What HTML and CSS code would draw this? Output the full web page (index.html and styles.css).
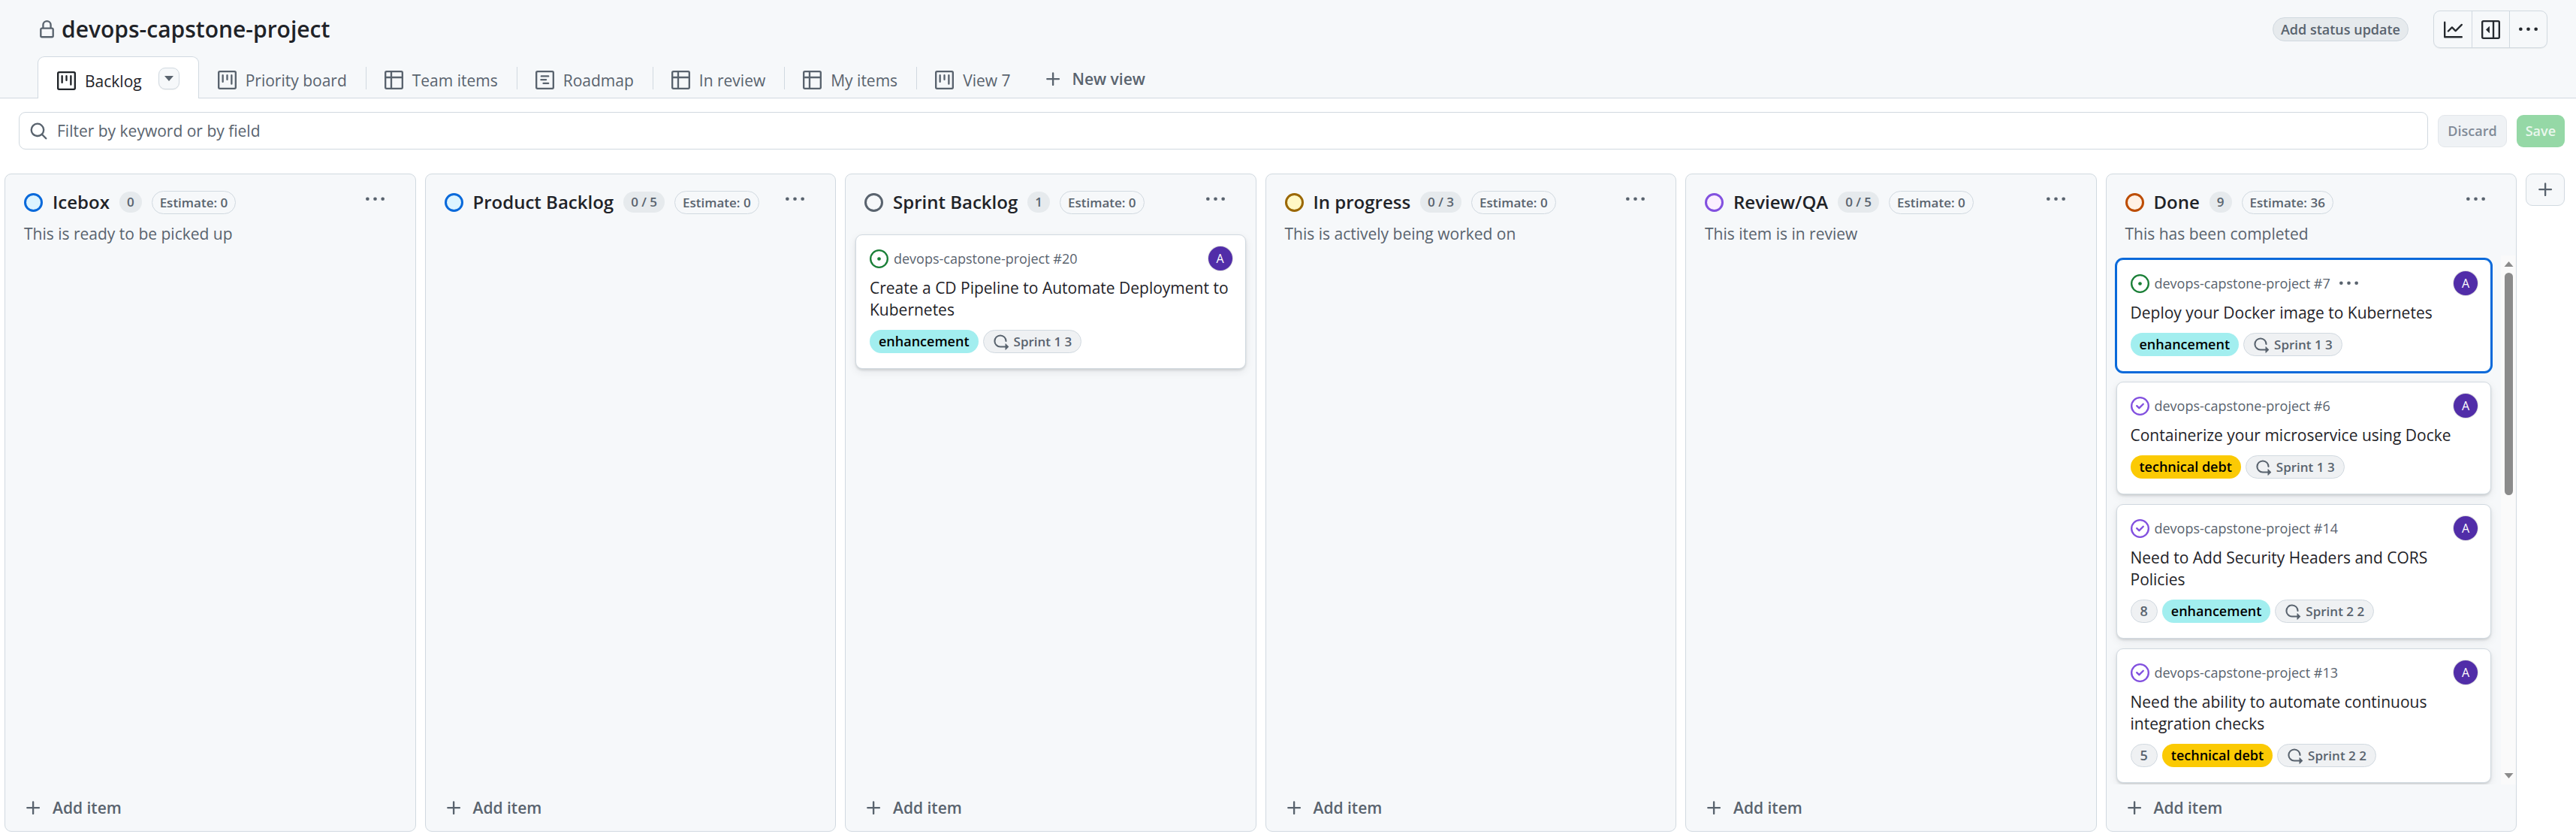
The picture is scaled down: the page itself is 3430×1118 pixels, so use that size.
FILE: index.html
```html
<!DOCTYPE html>
<html lang="en">
<head>
<meta charset="utf-8">
<meta name="viewport" content="width=device-width, initial-scale=1">
<title>devops-capstone-project</title>
<link rel="stylesheet" href="styles.css">
</head>
<body>
<svg class="sprite" aria-hidden="true">
  <symbol id="lock" viewBox="0 0 16 16"><path d="M4 4a4 4 0 0 1 8 0v2h.25c.966 0 1.75.784 1.75 1.75v5.5A1.75 1.75 0 0 1 12.25 15h-8.5A1.75 1.75 0 0 1 2 13.25v-5.5C2 6.784 2.784 6 3.75 6H4Zm8.25 3.5h-8.5a.25.25 0 0 0-.25.25v5.5c0 .138.112.25.25.25h8.5a.25.25 0 0 0 .25-.25v-5.5a.25.25 0 0 0-.25-.25ZM10.5 6V4a2.5 2.5 0 1 0-5 0v2Z"/></symbol>
  <symbol id="graph" viewBox="0 0 16 16"><path d="M1.5 1.75V13.5h13.75a.75.75 0 0 1 0 1.5H.75a.75.75 0 0 1-.75-.75V1.75a.75.75 0 0 1 1.5 0Zm14.28 2.53-5.25 5.25a.75.75 0 0 1-1.06 0L7 7.06 4.28 9.78a.751.751 0 0 1-1.042-.018.751.751 0 0 1-.018-1.042l3.25-3.25a.75.75 0 0 1 1.06 0L10 7.94l4.72-4.72a.751.751 0 0 1 1.042.018.751.751 0 0 1 .018 1.042Z"/></symbol>
  <symbol id="sidebar" viewBox="0 0 16 16"><rect x=".75" y=".75" width="14.5" height="14.5" rx="1" fill="none" stroke="currentColor" stroke-width="1.5"/><path d="M9.5 1H11v14H9.5ZM7 5.4v5.2a.25.25 0 0 1-.43.18L4 8.18a.25.25 0 0 1 0-.36l2.57-2.6A.25.25 0 0 1 7 5.4Z"/></symbol>
  <symbol id="kebab" viewBox="0 0 16 16"><path d="M8 9a1.5 1.5 0 1 0 0-3 1.5 1.5 0 0 0 0 3ZM1.5 9a1.5 1.5 0 1 0 0-3 1.5 1.5 0 0 0 0 3Zm13 0a1.5 1.5 0 1 0 0-3 1.5 1.5 0 0 0 0 3Z"/></symbol>
  <symbol id="board" viewBox="0 0 16 16"><rect x=".75" y=".75" width="14.5" height="14.5" rx="1" fill="none" stroke="currentColor" stroke-width="1.5"/><path d="M4.25 4v5.5M8 4v3.5M11.75 4v7.2" fill="none" stroke="currentColor" stroke-width="1.5" stroke-linecap="round"/></symbol>
  <symbol id="table" viewBox="0 0 16 16"><rect x=".75" y=".75" width="14.5" height="14.5" rx="1" fill="none" stroke="currentColor" stroke-width="1.5"/><path d="M1 5.75h14M5.75 1v14" fill="none" stroke="currentColor" stroke-width="1.5"/></symbol>
  <symbol id="roadmap" viewBox="0 0 16 16"><rect x=".75" y=".75" width="14.5" height="14.5" rx="1" fill="none" stroke="currentColor" stroke-width="1.5"/><path d="M5 4.75h6M4.75 7.75h4.25M6.75 10.75h4.25" fill="none" stroke="currentColor" stroke-width="1.5" stroke-linecap="round"/></symbol>
  <symbol id="plus" viewBox="0 0 16 16"><path d="M7.75 2a.75.75 0 0 1 .75.75V7h4.25a.75.75 0 0 1 0 1.5H8.5v4.25a.75.75 0 0 1-1.5 0V8.5H2.75a.75.75 0 0 1 0-1.5H7V2.75A.75.75 0 0 1 7.75 2Z"/></symbol>
  <symbol id="search" viewBox="0 0 16 16"><path d="M10.68 11.74a6 6 0 0 1-7.922-8.982 6 6 0 0 1 8.982 7.922l3.04 3.04a.749.749 0 0 1-.326 1.275.749.749 0 0 1-.734-.215ZM11.5 7a4.499 4.499 0 1 0-8.997 0A4.499 4.499 0 0 0 11.5 7Z"/></symbol>
  <symbol id="open" viewBox="0 0 16 16"><path d="M8 9.5a1.5 1.5 0 1 0 0-3 1.5 1.5 0 0 0 0 3Z"/><path d="M8 0a8 8 0 1 1 0 16A8 8 0 0 1 8 0ZM1.5 8a6.5 6.5 0 1 0 13 0 6.5 6.5 0 0 0-13 0Z"/></symbol>
  <symbol id="closed" viewBox="0 0 16 16"><path d="M11.28 6.78a.75.75 0 0 0-1.06-1.06L7.25 8.69 5.78 7.22a.75.75 0 0 0-1.06 1.06l2 2a.75.75 0 0 0 1.06 0l3.5-3.5Z"/><path d="M16 8A8 8 0 1 1 0 8a8 8 0 0 1 16 0Zm-1.5 0a6.5 6.5 0 1 0-13 0 6.5 6.5 0 0 0 13 0Z"/></symbol>
  <symbol id="iteration" viewBox="0 0 16 16"><path d="M2.5 7.25a4.75 4.75 0 0 1 9.5 0 .75.75 0 0 0 1.5 0 6.25 6.25 0 1 0-6.25 6.25H12v2.146c0 .223.27.335.427.177l2.896-2.896a.25.25 0 0 0 0-.354l-2.896-2.896a.25.25 0 0 0-.427.177V12H7.25A4.75 4.75 0 0 1 2.5 7.25Z"/></symbol>
</svg>

<header class="header">
  <div class="title-bar">
    <svg class="lock"><use href="#lock"/></svg>
    <h1 class="project-title">devops-capstone-project</h1>
    <button class="status" type="button">Add status update</button>
    <div class="button-group">
      <button type="button" aria-label="Insights"><svg class="icon"><use href="#graph"/></svg></button>
      <button type="button" aria-label="Project details"><svg class="icon"><use href="#sidebar"/></svg></button>
      <button type="button" aria-label="More options"><svg class="icon"><use href="#kebab"/></svg></button>
    </div>
  </div>
  <nav class="tabs" aria-label="Views">
    <div class="tab tab-active">
      <a class="tab-link" href="#" aria-current="page"><svg class="icon"><use href="#board"/></svg>Backlog</a>
      <button class="tab-menu" type="button" aria-label="View options"><svg class="caret" viewBox="0 0 12 7"><path d="M0 0h12L6 7Z"/></svg></button>
    </div>
    <a class="tab" href="#"><svg class="icon"><use href="#board"/></svg>Priority board</a>
    <a class="tab" href="#"><svg class="icon"><use href="#table"/></svg>Team items</a>
    <a class="tab" href="#"><svg class="icon"><use href="#roadmap"/></svg>Roadmap</a>
    <a class="tab" href="#"><svg class="icon"><use href="#table"/></svg>In review</a>
    <a class="tab" href="#"><svg class="icon"><use href="#table"/></svg>My items</a>
    <a class="tab" href="#"><svg class="icon"><use href="#board"/></svg>View 7</a>
    <button class="new-view" type="button"><svg class="icon"><use href="#plus"/></svg>New view</button>
  </nav>
</header>

<form class="filter">
  <label class="filter-box">
    <svg class="icon"><use href="#search"/></svg>
    <input type="text" placeholder="Filter by keyword or by field" aria-label="Filter by keyword or by field">
  </label>
  <button class="discard" type="button" disabled>Discard</button>
  <button class="save" type="button" disabled>Save</button>
</form>

<main class="board">
  <section class="column">
    <header class="column-head">
      <span class="dot dot-blue"></span><h2>Icebox</h2><span class="count">0</span><span class="estimate">Estimate: 0</span>
      <button class="more" type="button" aria-label="Column options"><svg class="icon"><use href="#kebab"/></svg></button>
    </header>
    <p class="column-note">This is ready to be picked up</p>
    <div class="list"></div>
    <button class="add-item" type="button"><svg class="icon"><use href="#plus"/></svg>Add item</button>
  </section>

  <section class="column">
    <header class="column-head">
      <span class="dot dot-blue"></span><h2>Product Backlog</h2><span class="count">0 / 5</span><span class="estimate">Estimate: 0</span>
      <button class="more" type="button" aria-label="Column options"><svg class="icon"><use href="#kebab"/></svg></button>
    </header>
    <div class="list"></div>
    <button class="add-item" type="button"><svg class="icon"><use href="#plus"/></svg>Add item</button>
  </section>

  <section class="column">
    <header class="column-head">
      <span class="dot dot-gray"></span><h2>Sprint Backlog</h2><span class="count">1</span><span class="estimate">Estimate: 0</span>
      <button class="more" type="button" aria-label="Column options"><svg class="icon"><use href="#kebab"/></svg></button>
    </header>
    <div class="list">
      <div class="cards">
        <article class="card">
          <div class="card-top"><svg class="icon state-open"><use href="#open"/></svg><span>devops-capstone-project #20</span><span class="avatar">A</span></div>
          <h3><a href="#">Create a CD Pipeline to Automate Deployment to Kubernetes</a></h3>
          <div class="tags"><span class="tag tag-enhancement">enhancement</span><span class="tag tag-plain tag-sprint"><svg class="icon-small"><use href="#iteration"/></svg>Sprint 1 3</span></div>
        </article>
      </div>
    </div>
    <button class="add-item" type="button"><svg class="icon"><use href="#plus"/></svg>Add item</button>
  </section>

  <section class="column">
    <header class="column-head">
      <span class="dot dot-yellow"></span><h2>In progress</h2><span class="count">0 / 3</span><span class="estimate">Estimate: 0</span>
      <button class="more" type="button" aria-label="Column options"><svg class="icon"><use href="#kebab"/></svg></button>
    </header>
    <p class="column-note">This is actively being worked on</p>
    <div class="list"></div>
    <button class="add-item" type="button"><svg class="icon"><use href="#plus"/></svg>Add item</button>
  </section>

  <section class="column">
    <header class="column-head">
      <span class="dot dot-purple"></span><h2>Review/QA</h2><span class="count">0 / 5</span><span class="estimate">Estimate: 0</span>
      <button class="more" type="button" aria-label="Column options"><svg class="icon"><use href="#kebab"/></svg></button>
    </header>
    <p class="column-note">This item is in review</p>
    <div class="list"></div>
    <button class="add-item" type="button"><svg class="icon"><use href="#plus"/></svg>Add item</button>
  </section>

  <section class="column">
    <header class="column-head">
      <span class="dot dot-orange"></span><h2>Done</h2><span class="count">9</span><span class="estimate">Estimate: 36</span>
      <button class="more" type="button" aria-label="Column options"><svg class="icon"><use href="#kebab"/></svg></button>
    </header>
    <p class="column-note">This has been completed</p>
    <div class="list">
      <div class="cards">
        <article class="card card-selected">
          <div class="card-top"><svg class="icon state-open"><use href="#open"/></svg><span>devops-capstone-project #7</span><button class="card-more" type="button" aria-label="Item options"><svg class="icon"><use href="#kebab"/></svg></button><span class="avatar">A</span></div>
          <h3><a href="#">Deploy your Docker image to Kubernetes</a></h3>
          <div class="tags"><span class="tag tag-enhancement">enhancement</span><span class="tag tag-plain tag-sprint"><svg class="icon-small"><use href="#iteration"/></svg>Sprint 1 3</span></div>
        </article>
        <article class="card">
          <div class="card-top"><svg class="icon state-closed"><use href="#closed"/></svg><span>devops-capstone-project #6</span><span class="avatar">A</span></div>
          <h3><a href="#">Containerize your microservice using Docke</a></h3>
          <div class="tags"><span class="tag tag-debt">technical debt</span><span class="tag tag-plain tag-sprint"><svg class="icon-small"><use href="#iteration"/></svg>Sprint 1 3</span></div>
        </article>
        <article class="card">
          <div class="card-top"><svg class="icon state-closed"><use href="#closed"/></svg><span>devops-capstone-project #14</span><span class="avatar">A</span></div>
          <h3><a href="#">Need to Add Security Headers and CORS Policies</a></h3>
          <div class="tags"><span class="tag tag-plain">8</span><span class="tag tag-enhancement">enhancement</span><span class="tag tag-plain tag-sprint"><svg class="icon-small"><use href="#iteration"/></svg>Sprint 2 2</span></div>
        </article>
        <article class="card">
          <div class="card-top"><svg class="icon state-closed"><use href="#closed"/></svg><span>devops-capstone-project #13</span><span class="avatar">A</span></div>
          <h3><a href="#">Need the ability to automate continuous integration checks</a></h3>
          <div class="tags"><span class="tag tag-plain">5</span><span class="tag tag-debt">technical debt</span><span class="tag tag-plain tag-sprint"><svg class="icon-small"><use href="#iteration"/></svg>Sprint 2 2</span></div>
        </article>
      </div>
      <div class="scrollbar" aria-hidden="true">
        <svg viewBox="0 0 12 7"><path d="M0 7h12L6 0Z"/></svg>
        <div class="track"><div class="thumb"></div></div>
        <svg viewBox="0 0 12 7"><path d="M0 0h12L6 7Z"/></svg>
      </div>
    </div>
    <button class="add-item" type="button"><svg class="icon"><use href="#plus"/></svg>Add item</button>
  </section>

  <button class="add-column" type="button" aria-label="Add a new column"><svg class="icon"><use href="#plus"/></svg></button>
</main>
</body>
</html>
```
FILE: styles.css
```css
:root {
  --ink: #1f2328;
  --muted: #59636e;
  --line: #d1d9e0;
  --subtle: #f6f8fa;
}

* { box-sizing: border-box; }

body {
  margin: 0;
  height: 100vh;
  display: flex;
  flex-direction: column;
  background: #fff;
  color: var(--ink);
  font: 21px/30px "Open Sans", "Noto Sans", sans-serif;
}

h1, h2, h3, p { margin: 0; }
a { color: inherit; text-decoration: none; }

button {
  margin: 0;
  padding: 0;
  border: 0;
  background: none;
  color: inherit;
  font: inherit;
}

svg { flex: none; fill: currentColor; display: block; }
.sprite { position: absolute; width: 0; height: 0; }
.icon { width: 25px; height: 25px; }
.icon-small { width: 22px; height: 22px; }

/* Header */
.header { background: var(--subtle); }

.title-bar {
  display: flex;
  align-items: center;
  height: 75px;
  padding: 3px 38px 0 50px;
}

.lock { width: 25px; height: 25px; color: var(--muted); }
.project-title { margin-left: 7px; font-size: 30px; line-height: 40px; font-weight: 600; }

.status {
  height: 32px;
  margin-left: auto;
  padding: 0 10px;
  border: 1px solid var(--line);
  border-radius: 16px;
  background: #e6eaed;
  color: var(--muted);
  font-size: 18px;
  line-height: 28px;
  font-weight: 600;
}

.button-group {
  display: flex;
  margin-left: 33px;
  border: 1px solid var(--line);
  border-radius: 9px;
  box-shadow: 0 1px 1px rgba(31, 35, 40, .06);
}

.button-group button { display: grid; place-items: center; width: 50px; height: 48px; color: #25292e; }
.button-group button + button { border-left: 1px solid var(--line); }

.tabs {
  display: flex;
  height: 56px;
  padding-left: 50px;
  border-bottom: 1px solid var(--line);
  color: var(--muted);
}

.tab { display: flex; align-items: center; gap: 12px; padding: 8px 25px 0; }
.tab + a.tab + a.tab { position: relative; }
.tab + a.tab + a.tab::before {
  content: "";
  position: absolute;
  left: 0;
  top: 14px;
  width: 1px;
  height: 30px;
  background: var(--line);
}

.tab-active {
  gap: 22px;
  margin-bottom: -1px;
  border: 1px solid var(--line);
  border-bottom: 0;
  border-radius: 9px 9px 0 0;
  background: #fff;
  color: var(--ink);
}

.tab-link { display: flex; align-items: center; gap: 12px; }

.tab-menu {
  display: grid;
  place-items: center;
  width: 28px;
  height: 29px;
  margin-bottom: 6px;
  border: 1px solid var(--line);
  border-radius: 9px;
  background: var(--subtle);
  color: var(--muted);
  box-shadow: 0 1px 1px rgba(31, 35, 40, .06);
}

.caret { width: 12px; height: 7px; }
.new-view { display: flex; align-items: center; gap: 12px; padding: 5px 20px 0; font-weight: 600; }

/* Filter */
.filter { display: flex; align-items: center; gap: 13px; padding: 18px 15px 0 25px; }

.filter-box {
  display: flex;
  flex: 1;
  align-items: center;
  gap: 12px;
  height: 50px;
  padding: 0 13px;
  border: 1px solid var(--line);
  border-radius: 9px;
  color: var(--muted);
}

.filter-box input { flex: 1; min-width: 0; padding: 0; border: 0; outline: 0; background: none; font: inherit; color: var(--ink); }
.filter-box input::placeholder { color: var(--muted); opacity: 1; }

.discard, .save { height: 43px; padding: 0 12px; border-radius: 9px; font-size: 18px; line-height: 28px; font-weight: 600; }
.discard { border: 1px solid #e3e7eb; background: #eff2f5; color: #818b98; }
.save { background: #95d8a6; color: #eaf7ed; }

/* Board */
.board {
  display: flex;
  flex: 1;
  align-items: stretch;
  gap: 12px;
  min-height: 0;
  padding: 32px 15px 11px 6px;
}

.column {
  display: flex;
  flex: 1;
  flex-direction: column;
  min-width: 0;
  border: 1px solid var(--line);
  border-radius: 9px;
  background: var(--subtle);
}

.column-head { display: flex; align-items: center; gap: 13px; padding: 20px 41px 0 25px; height: 54px; flex: none; }
.column-head h2 { font-size: 24px; line-height: 34px; font-weight: 600; white-space: nowrap; }

.dot { flex: none; width: 25px; height: 25px; border: 3px solid; border-radius: 50%; }
.dot-blue { border-color: #0969da; background: #ddf4ff; }
.dot-gray { border-color: #59636e; background: #f6f8fa; }
.dot-yellow { border-color: #9a6700; background: #fff8c5; }
.dot-purple { border-color: #8250df; background: #fbefff; }
.dot-orange { border-color: #bc4c00; background: #fff1e5; }

.count, .estimate { flex: none; color: var(--muted); font-size: 17px; font-weight: 600; }
.count { padding: 0 10px; border-radius: 14px; background: #e6eaed; line-height: 28px; }
.estimate { padding: 0 10px; border: 1px solid var(--line); border-radius: 16px; line-height: 29px; }
.more { margin: 0 0 8px auto; color: var(--muted); }
.column-note { padding: 9px 25px 0; line-height: 32px; color: var(--muted); height: 54px; flex: none; }

.list { display: flex; flex: 1; min-height: 0; overflow: hidden; }
.cards { display: flex; flex: 1; flex-direction: column; gap: 13px; min-width: 0; padding: 5px 13px 0 13px; }
.column-head + .list { padding-top: 21px; }

.card {
  flex: none;
  padding: 15px 17px 20px 18px;
  border: 1px solid var(--line);
  border-radius: 9px;
  background: #fff;
  box-shadow: 0 2px 3px rgba(37, 41, 46, .14), 0 4px 12px rgba(37, 41, 46, .08);
}

.card-selected { border-color: #0969da; box-shadow: 0 0 0 2px #0969da; }
.card-top { display: flex; align-items: center; gap: 7px; height: 32px; color: var(--muted); font-size: 18px; }
.card-more { margin-left: 5px; }
.state-open { color: #1a7f37; }
.state-closed { color: #8250df; }

.avatar {
  width: 32px;
  height: 32px;
  margin-left: auto;
  border-radius: 50%;
  background: #512da8;
  box-shadow: 0 0 0 1px rgba(31, 35, 40, .15);
  color: #fff;
  font-size: 16px;
  line-height: 32px;
  text-align: center;
}

.card h3 { margin-top: 9px; font-size: 21px; line-height: 29px; font-weight: 400; }
.tags { display: flex; gap: 6px; margin-top: 12px; }

.tag { height: 31px; padding: 0 12px; border-radius: 16px; font-size: 18px; line-height: 31px; font-weight: 600; }
.tag-enhancement { background: #a2eeef; color: #000; }
.tag-debt { background: #fbca04; color: #000; }
.tag-plain { border: 1px solid var(--line); background: #eff1f3; color: var(--muted); line-height: 29px; }
.tag-sprint { display: flex; align-items: center; gap: 6px; font-size: 17px; }

.scrollbar {
  display: flex;
  flex-direction: column;
  align-items: center;
  width: 20px;
  padding: 8px 0;
  background: #fafafa;
  color: #8b8b8b;
}

.scrollbar svg { width: 13px; height: 7px; }
.track { flex: 1; margin: 8px 0; }
.thumb { width: 11px; height: 45%; border-radius: 6px; background: #8b8b8b; }

.add-item {
  display: flex;
  flex: none;
  align-items: center;
  gap: 13px;
  height: 62px;
  padding: 0 25px;
  color: var(--muted);
  font-weight: 600;
}

.add-column {
  display: grid;
  place-items: center;
  width: 52px;
  height: 43px;
  border: 1px solid var(--line);
  border-radius: 9px;
  background: var(--subtle);
  color: var(--muted);
}
```
